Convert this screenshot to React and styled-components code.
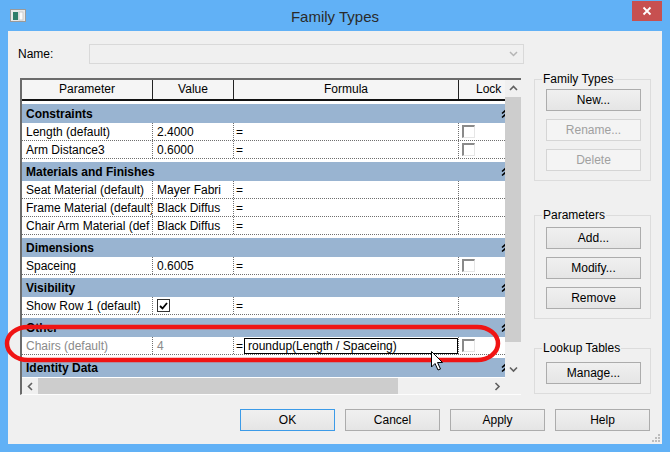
import styled, { createGlobalStyle } from 'styled-components';

const GlobalStyle = createGlobalStyle`
  html, body {
    margin: 0;
    padding: 0;
  }
  body {
    width: 670px;
    height: 452px;
    overflow: hidden;
    font-family: "Liberation Sans", Arial, sans-serif;
    font-size: 12px;
    color: #000;
  }
`;

const Window = styled.div`
  position: relative;
  width: 670px;
  height: 452px;
  box-sizing: border-box;
  background: #61b1f6;
  display: flex;
  flex-direction: column;
  padding: 0 8px 8px;
`;

const TitleBar = styled.div`
  height: 31px;
  display: grid;
  grid-template-columns: 1fr auto 1fr;
  align-items: center;
`;

const TitleText = styled.div`
  font-size: 15px;
  color: #2a2a2a;
  padding-top: 1px;
`;

const CloseBtn = styled.div`
  justify-self: end;
  align-self: start;
  width: 30px;
  height: 20px;
  margin-top: 1px;
  background: #c75050;
  display: flex;
  align-items: center;
  justify-content: center;
`;

const Client = styled.div`
  position: relative;
  flex: 1;
  background: #f0f0f0;
  display: flex;
  flex-direction: column;
  padding: 13px 12px 0 10px;
`;

const NameRow = styled.div`
  display: flex;
  align-items: center;
  height: 20px;
`;

const NameLabel = styled.div`
  width: 71px;
`;

const Combo = styled.div`
  width: 435px;
  height: 20px;
  box-sizing: border-box;
  border: 1px solid #d9d9d9;
  background: #f0f0f0;
  display: flex;
  align-items: center;
  justify-content: flex-end;
  padding-right: 5px;
`;

const Body = styled.div`
  display: flex;
  align-items: flex-start;
  margin: 14px 0 0 2px;
`;

const TableFrame = styled.div`
  width: 501px;
  height: 317px;
  box-sizing: border-box;
  border-top: 2px solid #6b6b6b;
  border-left: 2px solid #6b6b6b;
  border-bottom: 1px solid #fdfdfd;
  background: #fff;
  display: grid;
  grid-template-columns: 483px 16px;
  grid-template-rows: 298px 16px;
`;

const Content = styled.div`
  overflow: hidden;
  display: flex;
  flex-direction: column;
`;

const cols = '131px 81px 225px 46px';

const HeaderRow = styled.div`
  display: grid;
  grid-template-columns: ${cols};
  height: 21px;
  box-sizing: border-box;
  border-bottom: 2px solid #111;
  background: #f5f5f5;
`;

const HeaderCell = styled.div`
  text-align: ${(p) => (p.$left ? 'left' : 'center')};
  padding-left: ${(p) => (p.$left ? '17px' : '0')};
  line-height: 19px;
  border-right: ${(p) => (p.$last ? 'none' : '1px solid #222')};
`;

const Group = styled.div`
  padding-top: 3px;
`;

const Band = styled.div`
  height: 19px;
  background: #99b4d1;
  font-weight: bold;
  padding-left: 4px;
  display: flex;
  align-items: center;
  justify-content: space-between;
  overflow: hidden;
`;

const BandArrow = styled.svg`
  margin-right: -5px;
  flex: none;
`;

const Row = styled.div`
  display: grid;
  grid-template-columns: ${cols};
  height: 18px;
  box-sizing: border-box;
  border-bottom: 1px dotted #6f6f6f;
  color: ${(p) => (p.$dim ? '#8a8a8a' : '#000')};
`;

const Cell = styled.div`
  display: flex;
  align-items: center;
  padding-left: ${(p) => p.$pad ?? 4}px;
  white-space: nowrap;
  overflow: hidden;
  border-right: ${(p) => (p.$last ? 'none' : '1px dotted #6f6f6f')};
`;

const Eq = styled.span`
  color: #000;
`;

const FormulaInput = styled.div`
  flex: 1;
  height: 16px;
  margin-left: 1px;
  box-sizing: border-box;
  border: 1px solid #000;
  background: #fff;
  color: #000;
  padding-left: 3px;
  line-height: 14px;
`;

const Box = styled.span`
  width: 13px;
  height: 13px;
  box-sizing: border-box;
  background: #fff;
  display: flex;
  align-items: center;
  justify-content: center;
  border-top: 2px solid ${(p) => (p.$checked ? '#333' : '#8a8a8a')};
  border-left: 2px solid ${(p) => (p.$checked ? '#333' : '#8a8a8a')};
  border-right: 1px solid ${(p) => (p.$checked ? '#333' : '#e6e6e6')};
  border-bottom: 1px solid ${(p) => (p.$checked ? '#333' : '#e6e6e6')};
  ${(p) => p.$checked && 'border-width: 1px;'}
`;

const VScroll = styled.div`
  background: #f0f0f0;
  display: flex;
  flex-direction: column;
`;

const HScroll = styled.div`
  background: #f0f0f0;
  display: flex;
  align-items: stretch;
`;

const ArrowBtn = styled.div`
  flex: none;
  width: 16px;
  height: ${(p) => (p.$horiz ? '16px' : '17px')};
  display: flex;
  align-items: center;
  justify-content: center;
`;

const Thumb = styled.div`
  background: #cdcdcd;
  flex: none;
  width: ${(p) => p.$w || 'auto'};
  height: ${(p) => p.$h || 'auto'};
`;

const Track = styled.div`
  flex: 1;
`;

const Corner = styled.div`
  background: #f0f0f0;
`;

const Side = styled.div`
  width: 117px;
  margin: -6px 0 0 13px;
  display: flex;
  flex-direction: column;
`;

const GroupBox = styled.fieldset`
  margin: ${(p) => p.$mt || 0}px 0 0;
  padding: ${(p) => p.$pt}px 9px 9px 11px;
  border: 1px solid #dcdcdc;
  display: flex;
  flex-direction: column;
  gap: ${(p) => p.$gap || 8}px;
  min-width: 0;
`;

const Legend = styled.legend`
  padding: 0 1px;
  margin-left: -4px;
  line-height: 14px;
`;

const Button = styled.div`
  width: ${(p) => p.$w || 95}px;
  height: 22px;
  box-sizing: border-box;
  border: 1px solid ${(p) => (p.$default ? '#3c9be8' : p.$disabled ? '#d5d5d5' : '#acacac')};
  background: ${(p) => (p.$disabled ? '#f4f4f4' : 'linear-gradient(#f0f0f0, #e5e5e5)')};
  color: ${(p) => (p.$disabled ? '#a0a0a0' : '#000')};
  display: flex;
  align-items: center;
  justify-content: center;
`;

const Footer = styled.div`
  display: flex;
  justify-content: flex-end;
  gap: 10px;
  margin-top: 14px;
`;

const Grip = styled.svg`
  position: absolute;
  right: 2px;
  bottom: 2px;
`;

const Overlay = styled.svg`
  position: absolute;
  left: 0;
  top: 0;
  pointer-events: none;
`;

const groups = [
  {
    name: 'Constraints',
    rows: [
      { param: 'Length (default)', value: '2.4000', lock: true },
      { param: 'Arm Distance3', value: '0.6000', lock: true },
    ],
  },
  {
    name: 'Materials and Finishes',
    rows: [
      { param: 'Seat Material (default)', value: 'Mayer Fabri' },
      { param: 'Frame Material (default)', value: 'Black Diffus' },
      { param: 'Chair Arm Material (def', value: 'Black Diffus' },
    ],
  },
  { name: 'Dimensions', rows: [{ param: 'Spaceing', value: '0.6005', lock: true }] },
  { name: 'Visibility', rows: [{ param: 'Show Row 1 (default)', check: true }] },
  {
    name: 'Other',
    rows: [{ param: 'Chairs (default)', value: '4', lock: true, formula: 'roundup(Length / Spaceing)', dim: true }],
  },
  { name: 'Identity Data', rows: [] },
];

const Chevron = ({ dir }) => {
  const pts = {
    up: '1,5 4.5,1.5 8,5',
    down: '1,1.5 4.5,5 8,1.5',
    left: '5,1 1.5,4.5 5,8',
    right: '1.5,1 5,4.5 1.5,8',
  }[dir];
  const horiz = dir === 'left' || dir === 'right';
  return (
    <svg width={horiz ? 7 : 9} height={horiz ? 9 : 7}>
      <polyline points={pts} fill="none" stroke="#606060" strokeWidth="1.6" />
    </svg>
  );
};

function ParamRow({ row }) {
  return (
    <Row $dim={row.dim}>
      <Cell>{row.param}</Cell>
      <Cell>
        {row.check ? (
          <Box $checked>
            <svg width="9" height="8">
              <polyline points="1,4 3.5,6.5 8,1" fill="none" stroke="#000" strokeWidth="1.8" />
            </svg>
          </Box>
        ) : (
          row.value
        )}
      </Cell>
      <Cell $pad={2}>
        <Eq>=</Eq>
        {row.formula && <FormulaInput>{row.formula}</FormulaInput>}
      </Cell>
      <Cell $last $pad={3}>
        {row.lock && <Box />}
      </Cell>
    </Row>
  );
}

function ParamTable() {
  return (
    <TableFrame>
      <Content>
        <HeaderRow>
          <HeaderCell>Parameter</HeaderCell>
          <HeaderCell>Value</HeaderCell>
          <HeaderCell>Formula</HeaderCell>
          <HeaderCell $last $left>
            Lock
          </HeaderCell>
        </HeaderRow>
        {groups.map((g) => (
          <Group key={g.name}>
            <Band>
              {g.name}
              <BandArrow width="9" height="10">
                <polyline points="1,4.5 4.5,1.5 8,4.5" fill="none" stroke="#000" strokeWidth="1.6" />
                <polyline points="1,8.5 4.5,5.5 8,8.5" fill="none" stroke="#000" strokeWidth="1.6" />
              </BandArrow>
            </Band>
            {g.rows.map((r) => (
              <ParamRow key={r.param} row={r} />
            ))}
          </Group>
        ))}
      </Content>
      <VScroll>
        <ArrowBtn>
          <Chevron dir="up" />
        </ArrowBtn>
        <Thumb $h="245px" />
        <Track />
        <ArrowBtn>
          <Chevron dir="down" />
        </ArrowBtn>
      </VScroll>
      <HScroll>
        <ArrowBtn $horiz>
          <Chevron dir="left" />
        </ArrowBtn>
        <Thumb $w="360px" />
        <Track />
        <ArrowBtn $horiz>
          <Chevron dir="right" />
        </ArrowBtn>
      </HScroll>
      <Corner />
    </TableFrame>
  );
}

export default function App() {
  return (
    <>
      <GlobalStyle />
      <Window>
        <TitleBar>
          <svg width="17" height="13" style={{ marginLeft: 2 }}>
            <rect x="0.5" y="0.5" width="15" height="12" fill="#e9e9e9" stroke="#9a9a9a" />
            <rect x="3" y="3" width="5" height="8" fill="#2f7d6a" />
            <rect x="9" y="3" width="4" height="8" fill="#fafafa" stroke="#c4c4c4" strokeWidth="0.8" />
          </svg>
          <TitleText>Family Types</TitleText>
          <CloseBtn>
            <svg width="10" height="10">
              <path d="M1.5 1.5 L8.5 8.5 M8.5 1.5 L1.5 8.5" stroke="#fff" strokeWidth="1.8" />
            </svg>
          </CloseBtn>
        </TitleBar>
        <Client>
          <NameRow>
            <NameLabel>Name:</NameLabel>
            <Combo>
              <svg width="9" height="6">
                <polyline points="1,1 4.5,4.5 8,1" fill="none" stroke="#b5b5b5" strokeWidth="1.5" />
              </svg>
            </Combo>
          </NameRow>
          <Body>
            <ParamTable />
            <Side>
              <GroupBox $pt={3}>
                <Legend>Family Types</Legend>
                <Button>New...</Button>
                <Button $disabled>Rename...</Button>
                <Button $disabled>Delete</Button>
              </GroupBox>
              <GroupBox $mt={27} $pt={5} $gap={8}>
                <Legend>Parameters</Legend>
                <Button>Add...</Button>
                <Button>Modify...</Button>
                <Button>Remove</Button>
              </GroupBox>
              <GroupBox $mt={22} $pt={7}>
                <Legend>Lookup Tables</Legend>
                <Button>Manage...</Button>
              </GroupBox>
            </Side>
          </Body>
          <Footer>
            <Button $default>OK</Button>
            <Button>Cancel</Button>
            <Button>Apply</Button>
            <Button>Help</Button>
          </Footer>
          <Grip width="8" height="8">
            {[
              [6, 0],
              [6, 3],
              [3, 3],
              [6, 6],
              [3, 6],
              [0, 6],
            ].map(([x, y]) => (
              <rect key={`${x}-${y}`} x={x} y={y} width="2" height="2" fill="#bdbdbd" />
            ))}
          </Grip>
        </Client>
        <Overlay width="670" height="452">
          <rect x="7" y="327" width="491" height="33" rx="21" ry="16.5" fill="none" stroke="#f01414" strokeWidth="4.5" />
          <path
            d="M431.5 351.5 L431.5 367 L435 363.5 L438 370 L440.5 369 L437.5 362.5 L442.5 362.5 Z"
            fill="#fff"
            stroke="#000"
            strokeWidth="1"
          />
        </Overlay>
      </Window>
    </>
  );
}
